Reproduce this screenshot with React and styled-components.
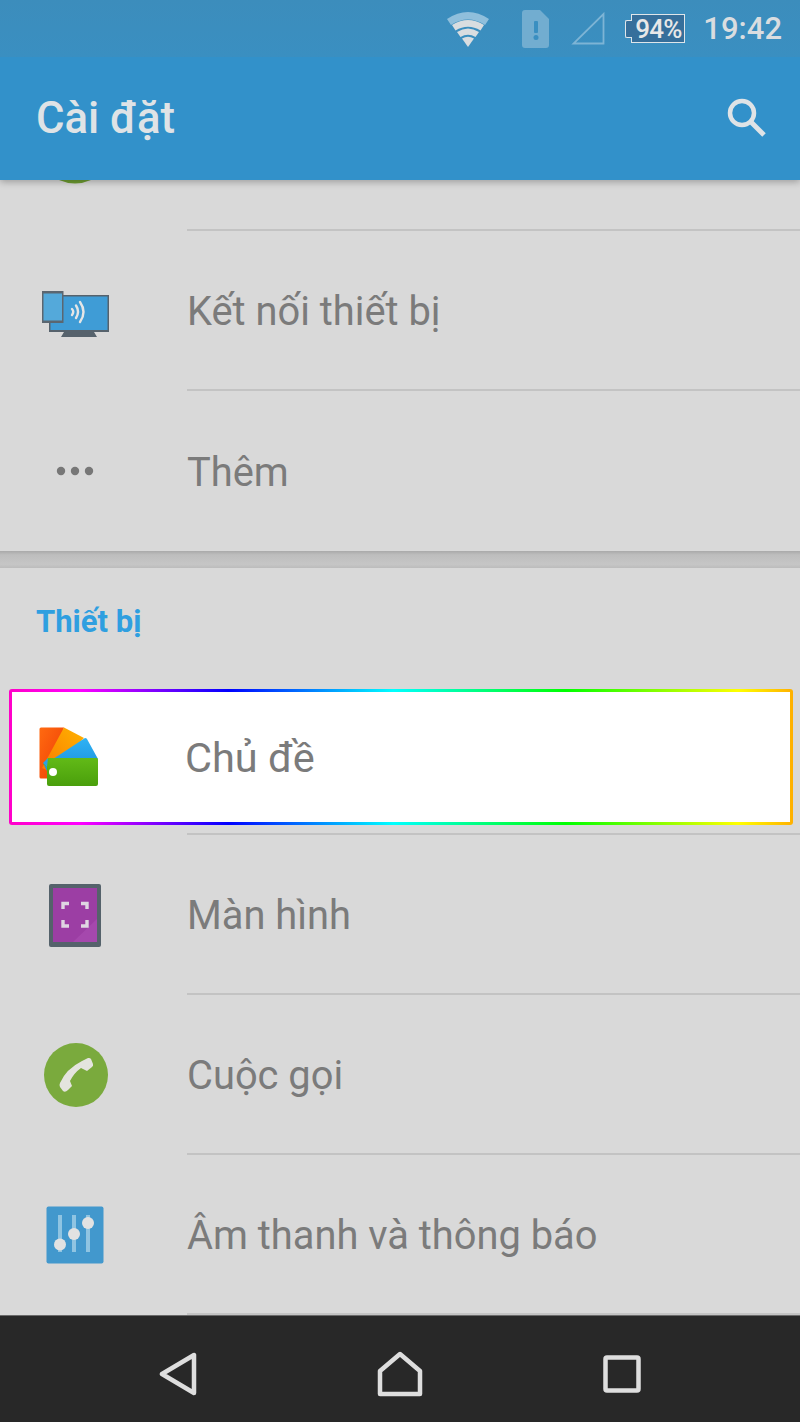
import React from "react";
import styled, { createGlobalStyle } from "styled-components";

const Global = createGlobalStyle`
  html, body { margin: 0; padding: 0; background: #d9d9d9; }
  * { box-sizing: border-box; }
  body { font-family: Roboto, "Noto Sans", sans-serif; }
`;

const Screen = styled.div`
  width: 800px;
  height: 1422px;
  display: flex;
  flex-direction: column;
  overflow: hidden;
  background: #d9d9d9;
`;

const Header = styled.header`
  position: relative;
  z-index: 2;
  flex: none;
  box-shadow: 0 2px 7px rgba(0, 0, 0, 0.28);
`;

const StatusBar = styled.div`
  height: 57px;
  background: linear-gradient(#3c8dbc, #3a8fc1);
  display: flex;
  align-items: center;
  justify-content: flex-end;
  padding: 0 18px 0 0;
`;

const StatusGlyph = styled.svg`
  display: block;
  flex: none;
  margin-left: ${(p) => p.$gap}px;
`;

const Battery = styled.div`
  position: relative;
  margin-left: 26px;
  width: 54px;
  height: 29px;
  background: #366f9b;
  border: 1.5px solid #dfe6ea;
  display: flex;
  align-items: center;
  justify-content: center;
  color: #e8e8e8;
  font-size: 26px;
  font-weight: 500;
  letter-spacing: -0.8px;
  &::before {
    content: "";
    position: absolute;
    left: -7px;
    top: 5px;
    width: 6px;
    height: 16px;
    background: #366f9b;
    border: 1.5px solid #dfe6ea;
    border-right: 0;
    border-radius: 2px 0 0 2px;
  }
`;

const Clock = styled.div`
  margin-left: 18px;
  color: #d9dde0;
  font-size: 31px;
  font-weight: 500;
  line-height: 57px;
`;

const Toolbar = styled.div`
  height: 123px;
  background: #3291ca;
  display: flex;
  align-items: center;
  justify-content: space-between;
  padding: 0 33px 2px 36px;
`;

const Title = styled.h1`
  margin: 0;
  color: #dfe3e6;
  font-size: 43.7px;
  font-weight: 500;
`;

const List = styled.main`
  flex: 1;
  min-height: 0;
  overflow: hidden;
  display: flex;
  flex-direction: column;
`;

const PeekRow = styled.div`
  height: 51px;
  flex: none;
  display: flex;
  align-items: flex-start;
`;

const PeekDivider = styled.div`
  flex: 1;
  align-self: stretch;
  margin-left: 96px;
  border-bottom: 2px solid #c3c3c3;
`;

const PeekIcon = styled.svg`
  display: block;
  margin-left: 59px;
  flex: none;
`;

const Row = styled.div`
  height: 160px;
  flex: none;
  display: flex;
  align-items: stretch;
`;

const IconSlot = styled.div`
  flex: none;
  width: 150px;
  display: flex;
  align-items: center;
  justify-content: center;
  padding-top: ${(p) => p.$down || 0}px;
  padding-left: ${(p) => p.$right || 0}px;
`;

const Body = styled.div`
  flex: 1;
  margin-left: 37px;
  padding-top: 2px;
  display: flex;
  align-items: center;
  border-bottom: ${(p) => (p.$last ? "0" : "2px solid #c3c3c3")};
`;

const Label = styled.span`
  color: #7b7b7b;
  font-size: 39.85px;
  font-weight: 400;
`;

const SectionEnd = styled.div`
  height: 17px;
  flex: none;
  background: linear-gradient(#a9a9a9, #bdbdbd 22%, #c6c6c6 78%, #bcbcbc);
`;

const SectionTitle = styled.div`
  height: 121px;
  flex: none;
  padding: 34px 0 0 36px;
  color: #2f9fe0;
  font-size: 31px;
  font-weight: 700;
  line-height: 40px;
`;

const Highlight = styled.div`
  flex: none;
  height: 136px;
  margin: 0 7px 0 9px;
  border: 3px solid transparent;
  border-radius: 3px;
  background:
    linear-gradient(#fff, #fff) padding-box,
    linear-gradient(90deg, #ff00c8 0%, #ff00ff 9%, #0000ff 28%, #00ffff 49%, #00ff00 71%, #ffff00 93%, #ffb000 100%) border-box;
  display: flex;
  align-items: center;
`;

const HighlightIcon = styled.div`
  flex: none;
  width: 113px;
  display: flex;
  justify-content: center;
`;

const HighlightLabel = styled(Label)`
  margin-left: 60px;
  font-size: 41.5px;
`;

const AfterHighlight = styled.div`
  flex: none;
  height: 2px;
  margin: 8px 0 0 187px;
  background: #c3c3c3;
`;

const NavBar = styled.nav`
  flex: none;
  height: 107px;
  background: #282828;
  border-top: 1px solid #6a6a6a;
  display: grid;
  grid-template-columns: repeat(3, 222px);
  justify-content: center;
  align-items: center;
  padding-top: 10px;
`;

const NavCell = styled.div`
  display: flex;
  justify-content: center;
`;

const Wifi = () => (
  <StatusGlyph $gap={0} width="44" height="38" viewBox="0 0 44 38">
    <path d="M1 9 Q22 -5 43 9 L39 15 Q22 4 5 15 Z" fill="#8fbfdc" />
    <path d="M6 15 Q22 5 38 15 L34.500 20.500 Q22 13 9.500 20.500 Z" fill="#d9dde0" />
    <path d="M11 22 Q22 15 33 22 L29.500 27 Q22 22.500 14.500 27 Z" fill="#d9dde0" />
    <path d="M16 28.500 Q22 25 28 28.500 L22 37 Z" fill="#d9dde0" />
  </StatusGlyph>
);

const Sim = () => (
  <StatusGlyph $gap={32} width="28" height="38" viewBox="0 0 28 38">
    <path d="M3 0 H18 L27 9 V35 Q27 38 24 38 H3 Q0 38 0 35 V3 Q0 0 3 0 Z" fill="#72add0" />
    <rect x="12" y="11" width="4" height="12" rx="1" fill="#3a8fc1" />
    <circle cx="14" cy="27.500" r="2.500" fill="#3a8fc1" />
  </StatusGlyph>
);

const Signal = () => (
  <StatusGlyph $gap={21} width="34" height="33" viewBox="0 0 34 33">
    <path d="M32.500 2 V31.500 H2.500 Z" fill="none" stroke="#7db4d5" strokeWidth="1.800" />
  </StatusGlyph>
);

const SearchIcon = () => (
  <svg width="40" height="40" viewBox="0 0 40 40" style={{ display: "block" }}>
    <circle cx="15" cy="15" r="12" fill="none" stroke="#dfe3e6" strokeWidth="4.500" />
    <path d="M24 24 L37 37" stroke="#dfe3e6" strokeWidth="5" />
  </svg>
);

const CastIcon = () => (
  <svg width="68" height="47" viewBox="0 0 68 47" style={{ display: "block" }}>
    <path d="M19 46 H55 L52 41 H22 Z" fill="#56626c" />
    <rect x="7" y="4" width="60" height="37" fill="#56626c" />
    <rect x="8.500" y="5.500" width="57" height="33.500" fill="#3f9cd6" />
    <rect x="0" y="0" width="21.500" height="32" fill="#5b6670" />
    <rect x="1.500" y="2.500" width="18.500" height="27" fill="#54a9da" />
    <g fill="none" stroke="#e6e6e6" strokeWidth="2.400" strokeLinecap="round">
      <path d="M30 18 Q32.500 20.500 30 24" />
      <path d="M34 14.500 Q38 20.500 34 27" />
      <path d="M38 11 Q45 21 38 31" />
    </g>
  </svg>
);

const DotsIcon = () => (
  <svg width="38" height="10" viewBox="0 0 38 10" style={{ display: "block" }}>
    <circle cx="5" cy="5" r="4.200" fill="#777" />
    <circle cx="19" cy="5" r="4.200" fill="#777" />
    <circle cx="33" cy="5" r="4.200" fill="#777" />
  </svg>
);

const ThemeIcon = () => (
  <svg width="60" height="60" viewBox="0 0 60 60" style={{ display: "block" }}>
    <defs>
      <linearGradient id="red" x1="0" y1="0" x2="1" y2="1">
        <stop offset="0" stopColor="#ff6a10" />
        <stop offset="1" stopColor="#ee3c05" />
      </linearGradient>
      <linearGradient id="org" x1="1" y1="0" x2="0" y2="1">
        <stop offset="0" stopColor="#ffb300" />
        <stop offset="1" stopColor="#f97a00" />
      </linearGradient>
      <linearGradient id="blu" x1="0" y1="0" x2="0" y2="1">
        <stop offset="0" stopColor="#2fb2f4" />
        <stop offset="1" stopColor="#1a8fdc" />
      </linearGradient>
      <linearGradient id="grn" x1="0" y1="0" x2="0" y2="1">
        <stop offset="0" stopColor="#62ba17" />
        <stop offset="1" stopColor="#4a9f0c" />
      </linearGradient>
    </defs>
    <path d="M0.500 2 Q0.500 0.500 2 0.500 H25 L12 45 L8 51.500 H2 Q0.500 51.500 0.500 50 Z" fill="url(#red)" />
    <path d="M25 0.500 L45 11 L12 45 L3 41 Z" fill="url(#org)" />
    <path d="M46 11 Q47.500 11 48 12 L59 32 L9 46 L5 38 Z" fill="url(#blu)" />
    <path d="M9 31 H57.500 Q59 31 59 32.500 V57 Q59 59 57 59 H10 Q8 59 8 57 V40 L4 37 Z" fill="url(#grn)" />
    <path d="M9 31 L4 36 L8 40 Z" fill="#2f9fe6" />
    <circle cx="14" cy="45" r="4" fill="#fff" />
  </svg>
);

const DisplayIcon = () => (
  <svg width="52" height="63" viewBox="0 0 52 63" style={{ display: "block" }}>
    <rect x="0" y="0" width="52" height="63" rx="2" fill="#55626b" />
    <rect x="4" y="4" width="44" height="54" fill="#9c3ea4" />
    <path d="M48 4 V35 L24 58 H48 Z" fill="#a94db0" opacity="0.7" />
    <g fill="none" stroke="#dfd6e2" strokeWidth="3.400">
      <path d="M14 25 V19.500 H20" />
      <path d="M32 19.500 H38 V25" />
      <path d="M14 36 V42 H20" />
      <path d="M32 42 H38 V36" />
    </g>
  </svg>
);

const CallIcon = () => (
  <svg width="64" height="64" viewBox="0 0 64 64" style={{ display: "block" }}>
    <circle cx="32" cy="32" r="32" fill="#7aaa3d" />
    <path
      d="M38 18 L44 15 Q46 14.500 47 16 L49 21 Q49.500 23 48 24 L43 28 L37 25 Q30 30 26 38 L28 43 L24 47 Q21 50 19 48 L16 44 Q15 42 16 40 Q22 26 38 18 Z"
      fill="#e4e4de"
    />
  </svg>
);

const SoundIcon = () => (
  <svg width="58" height="58" viewBox="0 0 58 58" style={{ display: "block" }}>
    <rect x="0.500" y="0.500" width="57" height="57" rx="2" fill="#4298cd" />
    <g fill="#8fc4e2">
      <rect x="12" y="9" width="4" height="37" />
      <rect x="26" y="9" width="4" height="37" />
      <rect x="40" y="9" width="4" height="37" />
    </g>
    <g fill="#e2e2e2">
      <circle cx="14" cy="38.500" r="6" />
      <circle cx="28" cy="28" r="6" />
      <circle cx="42" cy="17" r="6" />
    </g>
  </svg>
);

const Back = () => (
  <svg width="38" height="44" viewBox="0 0 38 44" style={{ display: "block" }}>
    <path d="M35 3 V41 L3 22 Z" fill="none" stroke="#dedede" strokeWidth="4.500" strokeLinejoin="round" />
  </svg>
);

const Home = () => (
  <svg width="46" height="46" viewBox="0 0 46 46" style={{ display: "block" }}>
    <path d="M3 43 V20 L23 3 L43 20 V43 Z" fill="none" stroke="#dedede" strokeWidth="4.500" strokeLinejoin="round" />
  </svg>
);

const Recent = () => (
  <svg width="38" height="38" viewBox="0 0 38 38" style={{ display: "block" }}>
    <rect x="2.500" y="2.500" width="33" height="33" rx="1.500" fill="none" stroke="#dedede" strokeWidth="4.500" />
  </svg>
);

export default function App() {
  return (
    <Screen>
      <Global />
      <Header>
        <StatusBar>
          <Wifi />
          <Sim />
          <Signal />
          <Battery>94%</Battery>
          <Clock>19:42</Clock>
        </StatusBar>
        <Toolbar>
          <Title>Cài đặt</Title>
          <SearchIcon />
        </Toolbar>
      </Header>
      <List>
        <PeekRow>
          <PeekIcon width="32" height="4" viewBox="0 0 32 4">
            <path d="M0 0 H32 Q24 3.500 16 3.500 Q8 3.500 0 0 Z" fill="#6e9d32" />
          </PeekIcon>
          <PeekDivider />
        </PeekRow>
        <Row>
          <IconSlot $down={6} $right={2}><CastIcon /></IconSlot>
          <Body><Label>Kết nối thiết bị</Label></Body>
        </Row>
        <Row>
          <IconSlot><DotsIcon /></IconSlot>
          <Body $last><Label>Thêm</Label></Body>
        </Row>
        <SectionEnd />
        <SectionTitle>Thiết bị</SectionTitle>
        <Highlight>
          <HighlightIcon><ThemeIcon /></HighlightIcon>
          <HighlightLabel>Chủ đề</HighlightLabel>
        </Highlight>
        <AfterHighlight />
        <Row>
          <IconSlot><DisplayIcon /></IconSlot>
          <Body><Label>Màn hình</Label></Body>
        </Row>
        <Row>
          <IconSlot $right={1}><CallIcon /></IconSlot>
          <Body><Label>Cuộc gọi</Label></Body>
        </Row>
        <Row>
          <IconSlot><SoundIcon /></IconSlot>
          <Body><Label>Âm thanh và thông báo</Label></Body>
        </Row>
      </List>
      <NavBar>
        <NavCell><Back /></NavCell>
        <NavCell><Home /></NavCell>
        <NavCell><Recent /></NavCell>
      </NavBar>
    </Screen>
  );
}
